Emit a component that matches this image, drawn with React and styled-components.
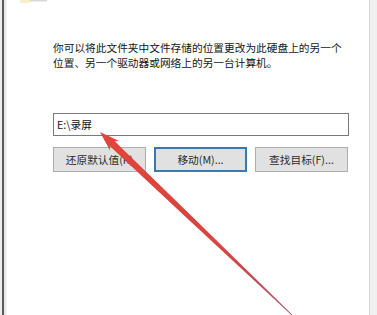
import React from 'react';
import styled, { createGlobalStyle } from 'styled-components';

// Base page reset
const GlobalStyle = createGlobalStyle`
  html, body {
    margin: 0;
    padding: 0;
    background: #ffffff;
  }
  #root {
    width: 377px;
    height: 315px;
    overflow: hidden;
  }
`;

const uiFont = `"Microsoft YaHei", "Noto Sans CJK SC", "Liberation Sans", sans-serif`;

// Window frame: left edge, panel, right edge
const Frame = styled.div`
  position: relative;
  display: flex;
  width: 377px;
  height: 315px;
  font-family: ${uiFont};
`;

const LeftEdge = styled.div`
  flex: 0 0 7px;
  background: linear-gradient(90deg, #ececec 0 2px, #5a5a5a 2px 4px, #e6e6e6 4px 6px, #f6f6f6 6px);
`;

const RightEdge = styled.div`
  flex: 0 0 7px;
  border-left: 1px solid #d6d6d6;
  background: #f0f0f0;
`;

const Panel = styled.div`
  flex: 1;
  display: flex;
  flex-direction: column;
  background: #ffffff;
`;

const IconStrip = styled.div`
  height: 6px;
  padding-left: 13px;
  display: flex;
  align-items: flex-start;
`;

const Content = styled.div`
  padding: 34px 0 0 46px;
  width: 296px;
  display: flex;
  flex-direction: column;
`;

const Description = styled.p`
  margin: 0;
  font-size: 10.7px;
  line-height: 15px;
  color: #141414;
`;

const PathInput = styled.div`
  margin-top: 43px;
  height: 21px;
  border: 1px solid #7a7a7a;
  padding-left: 3px;
  display: flex;
  align-items: center;
  font-size: 10.7px;
  color: #111;
`;

const ButtonRow = styled.div`
  margin-top: 11px;
  display: flex;
  gap: 8px;
`;

const Button = styled.div`
  width: 93px;
  height: 25px;
  box-sizing: border-box;
  display: flex;
  align-items: center;
  justify-content: center;
  background: #e1e1e1;
  border: ${p => (p.$focused ? '2px solid #3a78ad' : '1px solid #adadad')};
  font-size: 10.7px;
  color: #2a2a2a;
`;

// Red annotation arrow drawn over the dialog
const ArrowLayer = styled.svg`
  position: absolute;
  left: 0;
  top: 0;
  width: 377px;
  height: 315px;
  pointer-events: none;
`;

const Arrow = () => {
  const tip = [100, 132];
  const tail = [293, 316];
  const len = Math.hypot(tail[0] - tip[0], tail[1] - tip[1]);
  const d = [(tail[0] - tip[0]) / len, (tail[1] - tip[1]) / len];
  const n = [-d[1], d[0]];
  const at = (dist, off) => [tip[0] + d[0] * dist + n[0] * off, tip[1] + d[1] * dist + n[1] * off];
  const pts = [
    at(0, 0),
    at(20, 6.5),
    at(17, 3.4),
    at(len * 0.45, 2.4),
    at(len * 0.8, 1.2),
    at(len, 0.4),
    at(len, -0.4),
    at(len * 0.8, -1.2),
    at(len * 0.45, -2.4),
    at(17, -3.4),
    at(20, -6.5),
  ].map(p => p.map(v => v.toFixed(1)).join(',')).join(' ');
  return (
    <ArrowLayer viewBox="0 0 377 315">
      <defs>
        <linearGradient id="arrowFill" x1="100" y1="132" x2="293" y2="316" gradientUnits="userSpaceOnUse">
          <stop offset="0" stopColor="#e0443d" />
          <stop offset="0.65" stopColor="#d8443f" />
          <stop offset="1" stopColor="#a2606e" />
        </linearGradient>
      </defs>
      <polygon points={pts} fill="url(#arrowFill)" />
    </ArrowLayer>
  );
};

const App = () => (
  <>
    <GlobalStyle />
    <Frame>
      <LeftEdge />
      <Panel>
        <IconStrip>
          <svg width="28" height="4" viewBox="0 0 28 4">
            <rect x="0" y="0" width="10" height="3" fill="#f7f0c8" />
            <rect x="10" y="0" width="17" height="1.5" fill="#d8d8d8" />
          </svg>
        </IconStrip>
        <Content>
          <Description>
            你可以将此文件夹中文件存储的位置更改为此硬盘上的另一个位置、另一个驱动器或网络上的另一台计算机。
          </Description>
          <PathInput>E:\录屏</PathInput>
          <ButtonRow>
            <Button>还原默认值(R)</Button>
            <Button $focused>移动(M)...</Button>
            <Button>查找目标(F)...</Button>
          </ButtonRow>
        </Content>
      </Panel>
      <RightEdge />
      <Arrow />
    </Frame>
  </>
);

export default App;
